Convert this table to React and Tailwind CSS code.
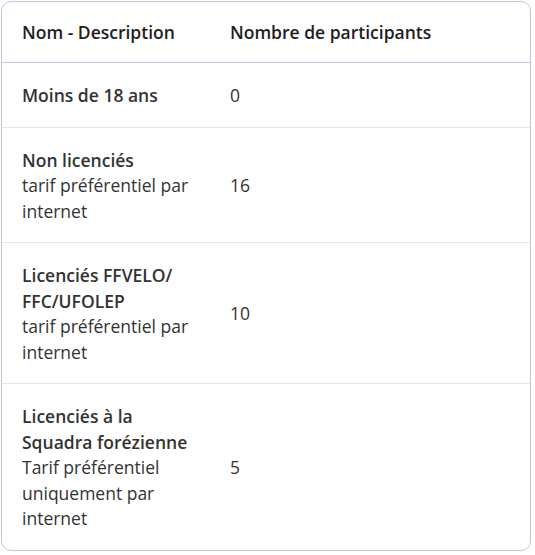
const rows = [
  { title: ["Moins de 18 ans"], desc: [], count: "0" },
  {
    title: ["Non licenciés"],
    desc: ["tarif préférentiel par internet"],
    count: "16",
  },
  {
    title: ["Licenciés FFVELO/", "FFC/UFOLEP"],
    desc: ["tarif préférentiel par internet"],
    count: "10",
  },
  {
    title: ["Licenciés à la Squadra forézienne"],
    desc: ["Tarif préférentiel uniquement par internet"],
    count: "5",
  },
];

const App = () => {
  return (
    <div
      className="p-[1px] bg-white"
      style={{ fontFamily: '"Open Sans", "Noto Sans", sans-serif' }}
    >
      <div className="w-[530px] h-[550px] border border-[#c8c4e0] rounded-[10px] overflow-hidden bg-white text-[17.5px] leading-[25.5px]">
        {/* Header */}
        <div className="grid grid-cols-[208px_1fr] border-b border-[#c8c4e0] h-[61px] items-center pt-[1px]">
          <div className="pl-5 font-semibold text-[#1e1e1e]">Nom - Description</div>
          <div className="pl-5 font-semibold text-[#1e1e1e]">Nombre de participants</div>
        </div>

        {rows.map((row, i) => (
          <div
            key={i}
            className={`grid grid-cols-[208px_1fr] items-center pt-5 pb-[18px] ${
              i < rows.length - 1 ? "border-b border-[#e6e6e6]" : ""
            }`}
          >
            <div className="pl-5 pr-4 text-[#333333]">
              {row.title.map((t) => (
                <div key={t} className="font-semibold">
                  {t}
                </div>
              ))}
              {row.desc.map((d) => (
                <div key={d}>{d}</div>
              ))}
            </div>
            <div className="pl-5 text-[#333333]">{row.count}</div>
          </div>
        ))}
      </div>
    </div>
  );
};

export default App;
